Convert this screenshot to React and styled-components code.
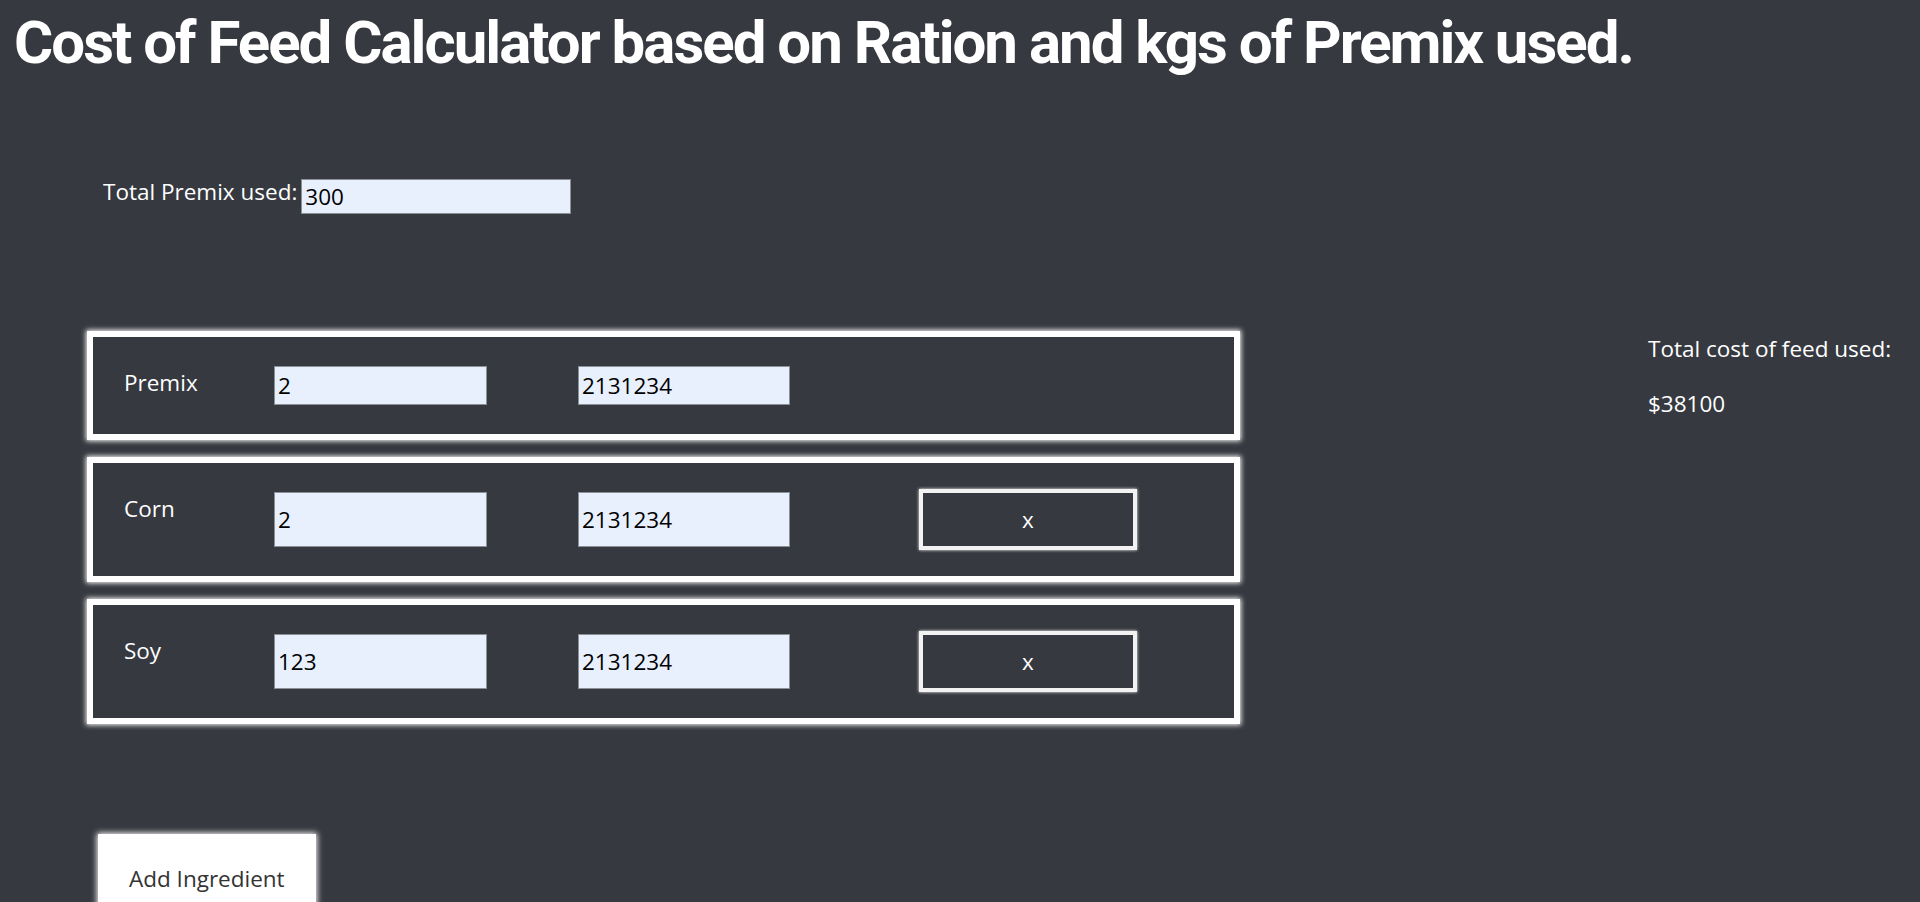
import React, { useState } from 'react';
import styled, { createGlobalStyle } from 'styled-components';

const GlobalStyle = createGlobalStyle`
  html, body {
    background: #36393f;
  }
  body {
    margin: 8px;
    color: #fff;
    font-family: 'Open Sans', 'Liberation Sans', sans-serif;
    font-size: 22.5px;
  }
`;

const Page = styled.div`
  padding-bottom: 96px;
`;

const Title = styled.h1`
  margin: 0;
  padding-left: 6px;
  font-family: Roboto, 'Liberation Sans', sans-serif;
  font-weight: 700;
  font-size: 60px;
  line-height: 70px;
  letter-spacing: -2px;
  color: #fff;
`;

const PremixRow = styled.div`
  display: flex;
  align-items: flex-start;
  gap: 4px;
  margin-top: 98px;
  padding-left: 95px;
  label {
    line-height: 31px;
  }
`;

const Field = styled.input`
  box-sizing: border-box;
  width: ${(p) => p.$width}px;
  height: ${(p) => (p.$height ? `${p.$height}px` : 'auto')};
  margin: ${(p) => p.$margin || '0'};
  padding: 0 3px;
  border: 1px solid #8b8f96;
  background: #e8f0fe;
  color: #000;
  font-family: 'Open Sans', 'Liberation Sans', sans-serif;
  font-size: 22.5px;
  outline: none;
`;

const Main = styled.div`
  display: flex;
  align-items: flex-start;
  gap: 408px;
  margin-top: 117px;
  padding-left: 79px;
`;

const Ingredients = styled.div`
  display: flex;
  flex-direction: column;
  gap: 17px;
`;

const Card = styled.div`
  box-sizing: border-box;
  width: 1153px;
  display: flex;
  align-items: center;
  padding: 26px 31px;
  border: 6px solid #fff;
  box-shadow: 0 0 5px 1px #fff;
  background: #36393f;
  .name {
    align-self: flex-start;
    width: 150px;
    line-height: 39px;
    padding-bottom: 6px;
  }
  input {
    align-self: stretch;
    margin: 3px 0;
  }
  .cost {
    margin-left: 91px;
  }
`;

const RemoveButton = styled.button`
  box-sizing: border-box;
  width: 218px;
  height: 61px;
  margin-left: 129px;
  border: 4px solid #f2f2f2;
  box-shadow: 0 0 3px #fff;
  background: #36393f;
  color: #fff;
  font-family: 'Open Sans', 'Liberation Sans', sans-serif;
  font-size: 22.5px;
  cursor: pointer;
`;

const Summary = styled.div`
  p {
    margin: 2px 0 24px;
    line-height: 31px;
  }
`;

const AddButton = styled.button`
  display: block;
  margin: 110px 0 0 90px;
  padding: 29px 31px;
  border: none;
  background: #fff;
  box-shadow: 0 0 6px 1px #fff;
  color: #333;
  font-family: 'Open Sans', 'Liberation Sans', sans-serif;
  font-size: 22.5px;
  line-height: 31px;
  cursor: pointer;
`;

const initial = [
  { name: 'Premix', ratio: '2', price: '2131234', fixed: true },
  { name: 'Corn', ratio: '2', price: '2131234' },
  { name: 'Soy', ratio: '123', price: '2131234' },
];

export default function App() {
  const [premix, setPremix] = useState('300');
  const [rows, setRows] = useState(initial);

  const update = (i, key, value) =>
    setRows(rows.map((r, j) => (j === i ? { ...r, [key]: value } : r)));

  return (
    <Page>
      <GlobalStyle />
      <Title>Cost of Feed Calculator based on Ration and kgs of Premix used.</Title>
      <PremixRow>
        <label>Total Premix used:</label>
        <Field
          $width={270}
          $height={35}
          $margin="3px 0 0"
          value={premix}
          onChange={(e) => setPremix(e.target.value)}
        />
      </PremixRow>
      <Main>
        <Ingredients>
          {rows.map((r, i) => (
            <Card key={r.name}>
              <span className="name">{r.name}</span>
              <Field $width={213} value={r.ratio} onChange={(e) => update(i, 'ratio', e.target.value)} />
              <Field
                className="cost"
                $width={212}
                value={r.price}
                onChange={(e) => update(i, 'price', e.target.value)}
              />
              {!r.fixed && (
                <RemoveButton onClick={() => setRows(rows.filter((_, j) => j !== i))}>x</RemoveButton>
              )}
            </Card>
          ))}
        </Ingredients>
        <Summary>
          <p>Total cost of feed used:</p>
          <p>$38100</p>
        </Summary>
      </Main>
      <AddButton>Add Ingredient</AddButton>
    </Page>
  );
}
